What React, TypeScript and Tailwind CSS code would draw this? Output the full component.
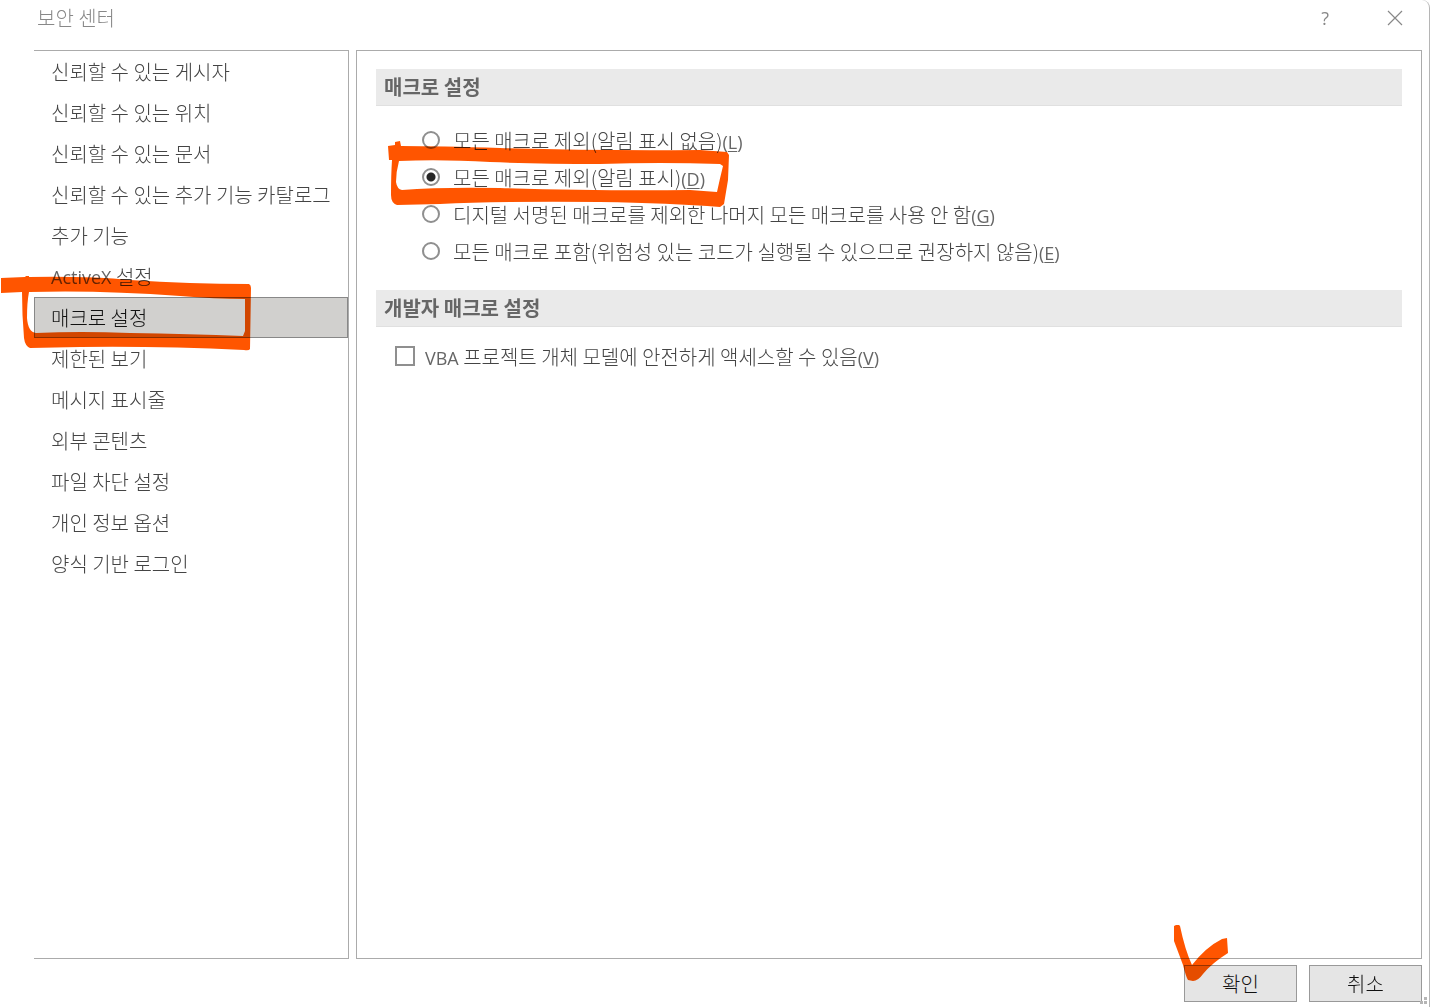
import { useState } from 'react';

interface Category {
  latin?: string;
  name: string;
}

interface MacroOption {
  id: string;
  label: string;
  accessKey: string;
}

const categories: Category[] = [
  { name: '신뢰할 수 있는 게시자' },
  { name: '신뢰할 수 있는 위치' },
  { name: '신뢰할 수 있는 문서' },
  { name: '신뢰할 수 있는 추가 기능 카탈로그' },
  { name: '추가 기능' },
  { latin: 'ActiveX', name: ' 설정' },
  { name: '매크로 설정' },
  { name: '제한된 보기' },
  { name: '메시지 표시줄' },
  { name: '외부 콘텐츠' },
  { name: '파일 차단 설정' },
  { name: '개인 정보 옵션' },
  { name: '양식 기반 로그인' },
];

const macroOptions: MacroOption[] = [
  { id: 'disable-silent', label: '모든 매크로 제외(알림 표시 없음)', accessKey: 'L' },
  { id: 'disable-notify', label: '모든 매크로 제외(알림 표시)', accessKey: 'D' },
  { id: 'signed-only', label: '디지털 서명된 매크로를 제외한 나머지 모든 매크로를 사용 안 함', accessKey: 'G' },
  { id: 'enable-all', label: '모든 매크로 포함(위험성 있는 코드가 실행될 수 있으므로 권장하지 않음)', accessKey: 'E' },
];

// marker around the highlighted category
function CategoryMark() {
  return (
    <svg
      className="pointer-events-none absolute -left-[34px] -top-[27px] h-[90px] w-[260px] mix-blend-multiply"
      viewBox="0 270 260 90"
      aria-hidden="true"
    >
      <path
        fill="#ff5500"
        fillRule="evenodd"
        d="M1 278 L25 277 L26 276 L29 276 L29 277 Q90 276 130 280 Q190 284 249 284 Q251 285 251 288 L250 349 Q249 351 244 350 Q160 346 80 347 L30 348 Q25 346 24 338 Q22 315 22 292 L1 293 Z M29 292 Q27 302 27 318 Q28 332 36 333 Q80 331 130 333 Q190 334 243 336 L245 331 L245 299 Q215 299 180 296 Q100 290 29 292 Z"
      />
    </svg>
  );
}

// marker around the chosen radio row
function OptionMark() {
  return (
    <svg
      className="pointer-events-none absolute -left-[42px] -top-[28px] h-[90px] w-[360px] mix-blend-multiply"
      viewBox="380 130 360 90"
      aria-hidden="true"
    >
      <path
        fill="#ff5500"
        fillRule="evenodd"
        d="M388 146 L395 145 L395 142 L400 141 L401 146 Q440 146 500 148 Q600 151 700 150 L727 152 L729 155 L728 180 L724 204 L720 207 Q670 203 600 202 Q500 201 440 204 L397 205 Q391 203 391 195 Q391 175 392 160 L389 160 Z M399 161 Q396 172 396 182 Q397 189 402 190 Q440 187 500 188 Q600 191 690 190 L717 192 Q720 178 723 166 L720 164 Q660 162 600 164 Q540 164 490 162 Q440 159 399 161 Z"
      />
    </svg>
  );
}

function CheckMark() {
  return (
    <svg
      className="pointer-events-none absolute -left-[14px] -top-[45px] h-[70px] w-[60px] mix-blend-multiply"
      viewBox="1170 920 60 70"
      aria-hidden="true"
    >
      <path
        fill="#ff5500"
        d="M1174 926 L1176 925 L1179 925 L1180 926 Q1185 950 1192 965 Q1206 947 1222 939 L1227 938 L1228 953 Q1212 963 1203 974 Q1198 981 1193 981 L1188 980 Q1186 977 1183 965 L1174 941 Z"
      />
    </svg>
  );
}

function SectionTitle({ children }: { children: string }) {
  return (
    <h2 className="flex h-[37px] items-center border-b border-[#e0e0e0] bg-[#eaeaea] px-2 font-bold text-[#666]">
      {children}
    </h2>
  );
}

function AccessKey({ children }: { children: string }) {
  return (
    <span className="font-['Open_Sans',sans-serif] text-lg leading-6 font-normal text-[#666]">
      (<u className="underline-offset-2">{children}</u>)
    </span>
  );
}

function App() {
  const [category, setCategory] = useState('매크로 설정');
  const [option, setOption] = useState('disable-notify');
  const [trustVba, setTrustVba] = useState(false);

  return (
    <div className="relative flex min-h-screen flex-col rounded-tr-lg border-r border-[#b5b5b5] bg-white pb-[5px] pl-[34px] pr-[7px] font-['Noto_Sans_CJK_KR',sans-serif] text-xl leading-6 font-light text-[#444]">
      <header className="flex h-[50px] items-start justify-between pl-[3px] pt-[6px] text-[#888]">
        <h1>보안 센터</h1>
        <div className="flex items-center gap-[58px] pr-[19px]">
          <button type="button" aria-label="도움말" className="font-['Open_Sans',sans-serif] text-lg leading-6 font-normal">
            ?
          </button>
          <button type="button" aria-label="닫기">
            <svg className="size-4" viewBox="0 0 16 16" fill="none" stroke="#888" strokeWidth="1.2">
              <path d="M1 1 L15 15 M15 1 L1 15" />
            </svg>
          </button>
        </div>
      </header>

      <main className="flex flex-1 gap-[7px]">
        <nav className="w-[315px] shrink-0 border-y border-r border-[#ababab]">
          <ul>
            {categories.map(({ latin, name }) => (
              <li key={name} className="relative">
                <button
                  type="button"
                  onClick={() => setCategory(name)}
                  className={
                    name === category
                      ? 'flex h-[41px] w-full items-center whitespace-pre border border-[#888] bg-[#d1d0ce] px-4 pt-px text-[#111]'
                      : 'flex h-[41px] w-full items-center whitespace-pre border border-transparent px-4 pt-px'
                  }
                >
                  {latin && (
                    <span className="font-['Open_Sans',sans-serif] text-lg leading-6 font-normal text-[#666]">{latin}</span>
                  )}
                  {name}
                </button>
                {name === '매크로 설정' && <CategoryMark />}
              </li>
            ))}
          </ul>
        </nav>

        <section className="flex-1 border border-[#ababab] px-[19px] pt-[18px]">
          <SectionTitle>매크로 설정</SectionTitle>
          <div role="radiogroup" aria-label="매크로 설정" className="pb-[21px] pl-[46px] pt-[15px]">
            {macroOptions.map(item => (
              <div key={item.id} className="relative flex h-[37px] items-center">
                <input
                  type="radio"
                  id={item.id}
                  name="macro"
                  checked={option === item.id}
                  onChange={() => setOption(item.id)}
                  className="size-[18px] shrink-0 appearance-none rounded-full border-2 border-[#8f8f8f] bg-white checked:bg-[radial-gradient(circle,#262626_4px,#fff_5px)]"
                />
                <label htmlFor={item.id} className="pl-[13px] pt-1">
                  {item.label}
                  <AccessKey>{item.accessKey}</AccessKey>
                </label>
                {item.id === 'disable-notify' && <OptionMark />}
              </div>
            ))}
          </div>

          <SectionTitle>개발자 매크로 설정</SectionTitle>
          <div className="flex items-center pl-[19px] pt-[14px]">
            <input
              type="checkbox"
              id="trust-vba"
              checked={trustVba}
              onChange={e => setTrustVba(e.target.checked)}
              className="size-5 shrink-0 appearance-none border-2 border-[#8f8f8f] bg-white checked:bg-[#555]"
            />
            <label htmlFor="trust-vba" className="pl-[10px] pt-1">
              <span className="font-['Open_Sans',sans-serif] text-lg leading-6 font-normal text-[#666]">VBA</span> 프로젝트 개체 모델에
              안전하게 액세스할 수 있음
              <AccessKey>V</AccessKey>
            </label>
          </div>
        </section>
      </main>

      <footer className="flex justify-end gap-3 pt-[6px] text-[#111]">
        <div className="relative flex">
          <button type="button" className="h-[37px] w-[113px] border border-[#999] bg-[#e5e5e5]">
            확인
          </button>
          <CheckMark />
        </div>
        <button type="button" className="h-[37px] w-[113px] border border-[#999] bg-[#e5e5e5]">
          취소
        </button>
      </footer>

      {/* resize grip */}
      <svg className="absolute bottom-0 right-0 size-[10px]" viewBox="0 0 10 10" fill="#b5b5b5" aria-hidden="true">
        <path d="M5 0h3v3h-3z M1 4h3v3h-3z M5 4h3v3h-3z" />
      </svg>
    </div>
  );
}

export default App;
